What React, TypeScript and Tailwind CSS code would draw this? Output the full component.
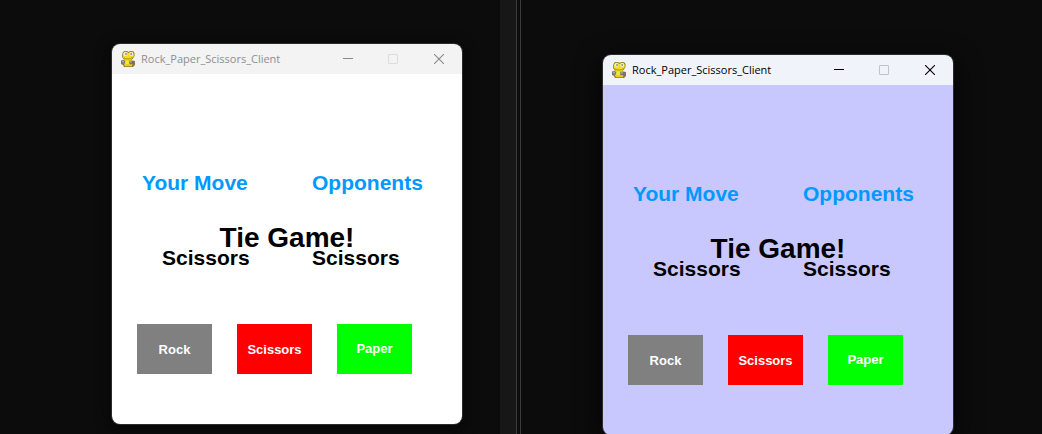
type Theme = {
  frame: string;
  bar: string;
  canvas: string;
  title: string;
  control: string;
  maximize: string;
};

const inactive: Theme = {
  frame: 'shadow-[0_0_0_1px_#2c2c2c,0_4px_16px_#050505]',
  bar: 'bg-[#f3f3f3]',
  canvas: 'bg-white',
  title: 'text-[#8e8e8e]',
  control: 'text-[#8a8a8a]',
  maximize: 'text-[#dcdcdc]',
};

const active: Theme = {
  frame: 'shadow-[0_0_0_1px_#2c2c2c,0_8px_28px_#020202]',
  bar: 'bg-[#f0f3fa]',
  canvas: 'bg-[#c8c8ff]',
  title: 'text-black',
  control: 'text-black',
  maximize: 'text-[#c0c2c8]',
};

function SnakeIcon() {
  return (
    <svg width="16" height="16" viewBox="0 0 16 16" aria-hidden="true" className="shrink-0">
      <path d="M4 0h3l1.500 1L10 0h3l1.500 2v3L13 7.500l-1 1 .5 1.500H15v4l-2 2H4l-1-2-2-1V9.500L4 9l-.5-1L2 6l.5-4z" fill="#8b7d2c" />
      <path d="M4.500 .8h2L8.500 2l2-1.200h2L13.700 3v2.500L11.500 8h-7L2.800 6 3.200 2.500z" fill="#f4dc18" />
      <path d="M4.500 8h7l1 3-.5 4.200H4.800L3.500 12z" fill="#e8cf22" />
      <circle cx="5.500" cy="3" r="2" fill="#ecefe8" />
      <circle cx="11.300" cy="3" r="2" fill="#ecefe8" />
      <path d="M5.300 2.300h1.400v1.500H5.300zM10.500 2.300h1.400v1.500h-1.400z" fill="#6f6c5c" />
      <path d="M4 6.800c2 1.600 6 1.600 8.500-.4" stroke="#a38c13" strokeWidth=".8" fill="none" />
      <path d="M1.200 9.700h4v2.800h-4zM9.300 9.700h5v3.500h-5z" fill="#707a7e" />
      <path d="M2 10.200h2v1H2zM10.200 10.300h1.500v1.200h-1.500z" fill="#b9bfc0" />
      <path d="M12 10.500h1.800v2H12z" fill="#a4584e" />
      <path d="M5.500 9.500h3.300v3.500H5.500z" fill="#f7e53c" />
    </svg>
  );
}

function TitleBar({ theme }: { theme: Theme }) {
  return (
    <header className={`flex h-[30px] items-center pl-2 ${theme.bar}`}>
      <SnakeIcon />
      <h2
        className={`ml-[5px] flex-1 whitespace-nowrap font-['Open_Sans','Noto_Sans',sans-serif] text-[11px] leading-4 ${theme.title}`}
      >
        Rock_Paper_Scissors_Client
      </h2>
      <div className={`flex h-full ${theme.control}`}>
        <button type="button" aria-label="Minimize" className="grid w-11 place-items-center">
          <svg width="10" height="10" viewBox="0 0 10 10" aria-hidden="true">
            <path d="M0 4.500h10" stroke="currentColor" />
          </svg>
        </button>
        <button
          type="button"
          aria-label="Maximize"
          disabled
          className={`grid w-[46px] place-items-center ${theme.maximize}`}
        >
          <svg width="10" height="10" viewBox="0 0 10 10" aria-hidden="true">
            <rect x=".5" y=".5" width="9" height="9" rx=".5" stroke="currentColor" fill="none" />
          </svg>
        </button>
        <button type="button" aria-label="Close" className="grid w-[46px] place-items-center">
          <svg width="10" height="10" viewBox="0 0 10 10" aria-hidden="true">
            <path d="M0 0l10 10M10 0L0 10" stroke="currentColor" strokeWidth="1.100" />
          </svg>
        </button>
      </div>
    </header>
  );
}

const moves = [
  { name: 'Rock', style: 'bg-[#808080] pt-[2px]' },
  { name: 'Scissors', style: 'bg-[#ff0000] pt-[2px]' },
  { name: 'Paper', style: 'bg-[#00ff00]' },
];

function GameWindow({ theme }: { theme: Theme }) {
  return (
    <section className={`w-[350px] shrink-0 overflow-hidden rounded-lg ${theme.frame}`}>
      <TitleBar theme={theme} />
      <div
        className={`pt-[99px] pb-[50px] font-['Liberation_Sans',Arial,sans-serif] font-bold text-black ${theme.canvas}`}
      >
        <div className="grid grid-cols-[170px_1fr] pl-[30px] text-[21px] leading-5 text-[#0099ff]">
          <p>Your Move</p>
          <p>Opponents</p>
        </div>
        <p className="mt-[35px] text-center text-[28px] leading-5">Tie Game!</p>
        <div className="grid grid-cols-[150px_1fr] pl-[50px] text-[21px] leading-5">
          <p>Scissors</p>
          <p>Scissors</p>
        </div>
        <div className="mt-[56px] flex gap-[25px] pl-[25px] text-[13px] leading-4 text-white">
          {moves.map((move) => (
            <button key={move.name} type="button" className={`h-[50px] w-[75px] ${move.style}`}>
              {move.name}
            </button>
          ))}
        </div>
      </div>
    </section>
  );
}

export default function App() {
  return (
    <main className="grid h-screen grid-cols-[500fr_21px_521fr] overflow-hidden bg-[#0c0c0c]">
      <div className="flex items-start pt-11 pl-28">
        <GameWindow theme={inactive} />
      </div>
      <div className="flex">
        <div className="w-4 bg-[#171717]" />
        <div className="w-[5px] border-x border-[#3c3c3c]" />
      </div>
      <div className="flex items-start pt-[55px] pl-[82px]">
        <GameWindow theme={active} />
      </div>
    </main>
  );
}
